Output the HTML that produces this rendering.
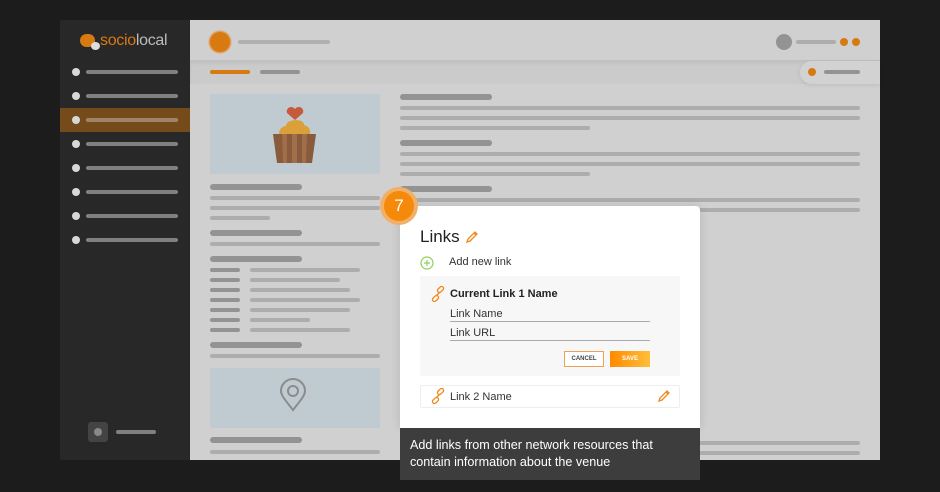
<!DOCTYPE html><html><head><style>
*{margin:0;padding:0;box-sizing:border-box}
body{width:940px;height:492px;background:#1c1c1c;position:relative;overflow:hidden;font-family:"Liberation Sans",sans-serif}
.a{position:absolute}
.b{position:absolute;height:5px;border-radius:3px;background:#adadad}
.d{position:absolute;height:6px;border-radius:3px;background:#939393}
.s{position:absolute;height:4px;border-radius:2px;background:#808080;left:86px;width:92px}
.sd{position:absolute;width:8px;height:8px;border-radius:50%;background:#d8d8d8;left:72px}
</style></head><body>
<div class="a" style="left:60px;top:20px;width:130px;height:440px;background:#282828"></div>
<div class="a" style="left:190px;top:20px;width:690px;height:440px;background:#d0d0d0;overflow:hidden"></div>
<div class="a" style="left:190px;top:60px;width:690px;height:24px;background:#cbcbcb;box-shadow:inset 0 3px 4px rgba(0,0,0,.06)"></div>
<div class="a" style="left:800px;top:61px;width:80px;height:23px;background:#d2d2d2;border-radius:12px 0 0 12px;box-shadow:0 1px 4px rgba(0,0,0,.1)"></div>
<div class="a" style="left:808px;top:68px;width:8px;height:8px;border-radius:50%;background:#d77a12"></div>
<div class="d" style="left:824px;top:70px;width:36px;height:4px"></div>
<!-- logo -->
<div class="a" style="left:80px;top:34px;width:15px;height:13px;border-radius:7px;background:#d77a12"></div>
<div class="a" style="left:91px;top:42px;width:9px;height:8px;border-radius:50%;background:#ddd"></div>
<div class="a" style="left:100px;top:32px;font-size:16px;color:#d77a12;letter-spacing:-.3px">socio<span style="color:#bbb">local</span></div>
<!-- header -->
<div class="a" style="left:210px;top:32px;width:20px;height:20px;border-radius:50%;background:#d77a12;box-shadow:0 0 0 1.5px #e2a060"></div>
<div class="b" style="left:238px;top:40px;width:92px;height:4px;background:#b0b0b0"></div>
<div class="a" style="left:776px;top:34px;width:16px;height:16px;border-radius:50%;background:#939393"></div>
<div class="b" style="left:796px;top:40px;width:40px;height:4px"></div>
<div class="a" style="left:840px;top:38px;width:8px;height:8px;border-radius:50%;background:#d77a12"></div>
<div class="a" style="left:852px;top:38px;width:8px;height:8px;border-radius:50%;background:#d77a12"></div>
<div class="a" style="left:210px;top:70px;width:40px;height:4px;border-radius:2px;background:#d77a12"></div>
<div class="d" style="left:260px;top:70px;width:40px;height:4px"></div>
<!-- sidebar -->
<div class="a" style="left:60px;top:108px;width:130px;height:24px;background:#754b1c"></div>
<div class="sd" style="top:68px"></div><div class="s" style="top:70px"></div>
<div class="sd" style="top:92px"></div><div class="s" style="top:94px"></div>
<div class="sd" style="top:116px"></div><div class="s" style="top:118px;background:#a08466"></div>
<div class="sd" style="top:140px"></div><div class="s" style="top:142px"></div>
<div class="sd" style="top:164px"></div><div class="s" style="top:166px"></div>
<div class="sd" style="top:188px"></div><div class="s" style="top:190px"></div>
<div class="sd" style="top:212px"></div><div class="s" style="top:214px"></div>
<div class="sd" style="top:236px"></div><div class="s" style="top:238px"></div>
<div class="a" style="left:88px;top:422px;width:20px;height:20px;border-radius:3px;background:#444"></div>
<div class="a" style="left:94px;top:428px;width:8px;height:8px;border-radius:50%;background:#888"></div>
<div class="s" style="left:116px;top:430px;width:40px"></div>
<!-- left col -->
<div class="a" style="left:210px;top:94px;width:170px;height:80px;background:#bfcbd0;border-radius:2px"></div>
<svg class="a" style="left:270px;top:104px" width="50" height="62" viewBox="0 0 50 62">
<path d="M25 16 L17 9 a4.5 4.5 0 0 1 8 -4 a4.5 4.5 0 0 1 8 4z" fill="#c85a3c"/>
<path d="M9 30 q0-7 7-8 q0-5 9-6 q9 0 9 5 q7 2 6 9z" fill="#dca03a"/>
<path d="M3 30 h43 l-4 29 h-35z" fill="#8a5a3c"/>
<path d="M12 30 h5 v29 h-4z M22 30 h5 v29 h-5z M32 30 h5 l-1 29 h-4z" fill="#a06e48"/>
</svg>
<div class="d" style="left:210px;top:184px;width:92px"></div>
<div class="b" style="left:210px;top:196px;width:170px;height:4px"></div>
<div class="b" style="left:210px;top:206px;width:170px;height:4px"></div>
<div class="b" style="left:210px;top:216px;width:60px;height:4px"></div>
<div class="d" style="left:210px;top:230px;width:92px"></div>
<div class="b" style="left:210px;top:242px;width:170px;height:4px"></div>
<div class="d" style="left:210px;top:256px;width:92px"></div>
<div class="d" style="left:210px;top:268px;width:30px;height:4px"></div><div class="b" style="left:250px;top:268px;width:110px;height:4px"></div>
<div class="d" style="left:210px;top:278px;width:30px;height:4px"></div><div class="b" style="left:250px;top:278px;width:90px;height:4px"></div>
<div class="d" style="left:210px;top:288px;width:30px;height:4px"></div><div class="b" style="left:250px;top:288px;width:100px;height:4px"></div>
<div class="d" style="left:210px;top:298px;width:30px;height:4px"></div><div class="b" style="left:250px;top:298px;width:110px;height:4px"></div>
<div class="d" style="left:210px;top:308px;width:30px;height:4px"></div><div class="b" style="left:250px;top:308px;width:100px;height:4px"></div>
<div class="d" style="left:210px;top:318px;width:30px;height:4px"></div><div class="b" style="left:250px;top:318px;width:60px;height:4px"></div>
<div class="d" style="left:210px;top:328px;width:30px;height:4px"></div><div class="b" style="left:250px;top:328px;width:100px;height:4px"></div>
<div class="d" style="left:210px;top:342px;width:92px"></div>
<div class="b" style="left:210px;top:354px;width:170px;height:4px"></div>
<div class="a" style="left:210px;top:368px;width:170px;height:60px;background:#bfcbd0;border-radius:2px"></div>
<svg class="a" style="left:279px;top:378px" width="28" height="34" viewBox="0 0 28 34"><path d="M14 32 C8 24 2 18 2 13 a12 12 0 0 1 24 0 c0 5-6 11-12 19z" fill="none" stroke="#8c8c8c" stroke-width="2"/><circle cx="14" cy="13" r="5" fill="none" stroke="#8c8c8c" stroke-width="2"/></svg>
<div class="d" style="left:210px;top:437px;width:92px"></div>
<div class="b" style="left:210px;top:450px;width:170px;height:4px"></div>
<!-- right col -->
<div class="d" style="left:400px;top:94px;width:92px"></div>
<div class="b" style="left:400px;top:106px;width:460px;height:4px"></div>
<div class="b" style="left:400px;top:116px;width:460px;height:4px"></div>
<div class="b" style="left:400px;top:126px;width:190px;height:4px"></div>
<div class="d" style="left:400px;top:140px;width:92px"></div>
<div class="b" style="left:400px;top:152px;width:460px;height:4px"></div>
<div class="b" style="left:400px;top:162px;width:460px;height:4px"></div>
<div class="b" style="left:400px;top:172px;width:190px;height:4px"></div>
<div class="d" style="left:400px;top:186px;width:92px"></div>
<div class="b" style="left:400px;top:198px;width:460px;height:4px"></div>
<div class="b" style="left:400px;top:208px;width:460px;height:4px"></div>
<div class="b" style="left:400px;top:441px;width:460px;height:4px"></div>
<div class="b" style="left:400px;top:451px;width:460px;height:4px"></div>
<!-- card -->
<div class="a" style="left:400px;top:206px;width:300px;height:222px;background:#fff;border-radius:4px 4px 0 0;box-shadow:0 0 10px rgba(0,0,0,.12)"></div>
<div class="a" style="left:400px;top:428px;width:300px;height:52px;background:#3d3d3d;color:#fff;font-size:12.6px;line-height:17px;padding:9px 10px">Add links from other network resources that contain information about the venue</div>
<div class="a" style="left:380px;top:187px;width:38px;height:38px;border-radius:50%;background:#f0b068"></div>
<div class="a" style="left:384px;top:191px;width:30px;height:30px;border-radius:50%;background:#f58a0a;color:#fff;font-size:17px;text-align:center;line-height:30px">7</div>
<div class="a" style="left:420px;top:227px;font-size:17px;color:#222">Links</div>
<svg class="a" style="left:465px;top:230px" width="14" height="14" viewBox="0 0 14 14"><path d="M2 12 l1-3 7-7 2 2 -7 7z M9 3 l2 2" fill="none" stroke="#f08a1a" stroke-width="1.3"/></svg>
<svg class="a" style="left:420px;top:256px" width="14" height="14"><circle cx="7" cy="7" r="6" fill="none" stroke="#8ed05a" stroke-width="1.2"/><path d="M7 4v6M4 7h6" stroke="#8ed05a" stroke-width="1.2"/></svg>
<div class="a" style="left:449px;top:256px;font-size:11px;color:#333">Add new link</div>
<div class="a" style="left:420px;top:276px;width:260px;height:100px;background:#f7f7f7"></div>
<svg class="a" style="left:430px;top:286px" width="16" height="16" viewBox="0 0 16 16"><g fill="none" stroke="#f08a1a" stroke-width="1.3"><rect x="7" y="1.5" width="7" height="4" rx="2" transform="rotate(-45 10.5 3.5)"/><rect x="2" y="10.5" width="7" height="4" rx="2" transform="rotate(-45 5.5 12.5)"/><path d="M6 10l4-4"/></g></svg>
<div class="a" style="left:450px;top:288px;font-size:11px;font-weight:bold;color:#222">Current Link 1 Name</div>
<div class="a" style="left:450px;top:308px;font-size:11px;color:#333">Link Name</div>
<div class="a" style="left:450px;top:321px;width:200px;height:1px;background:#aaa"></div>
<div class="a" style="left:450px;top:327px;font-size:11px;color:#333">Link URL</div>
<div class="a" style="left:450px;top:340px;width:200px;height:1px;background:#aaa"></div>
<div class="a" style="left:564px;top:351px;width:40px;height:16px;border:1px solid #f0a050;background:#fff;font-size:6px;font-weight:bold;color:#444;text-align:center;line-height:14px">CANCEL</div>
<div class="a" style="left:610px;top:351px;width:40px;height:16px;background:linear-gradient(90deg,#ff8a00,#ffbe3a);font-size:6px;font-weight:bold;color:#fff;text-align:center;line-height:16px">SAVE</div>
<div class="a" style="left:420px;top:385px;width:260px;height:23px;border:1px solid #eeeeee;border-radius:2px"></div>
<svg class="a" style="left:430px;top:388px" width="16" height="16" viewBox="0 0 16 16"><g fill="none" stroke="#f08a1a" stroke-width="1.3"><rect x="7" y="1.5" width="7" height="4" rx="2" transform="rotate(-45 10.5 3.5)"/><rect x="2" y="10.5" width="7" height="4" rx="2" transform="rotate(-45 5.5 12.5)"/><path d="M6 10l4-4"/></g></svg>
<div class="a" style="left:450px;top:391px;font-size:11px;color:#333">Link 2 Name</div>
<svg class="a" style="left:657px;top:389px" width="14" height="14" viewBox="0 0 14 14"><path d="M2 12 l1-3 7-7 2 2 -7 7z M9 3 l2 2" fill="none" stroke="#f08a1a" stroke-width="1.3"/></svg>
</body></html>
